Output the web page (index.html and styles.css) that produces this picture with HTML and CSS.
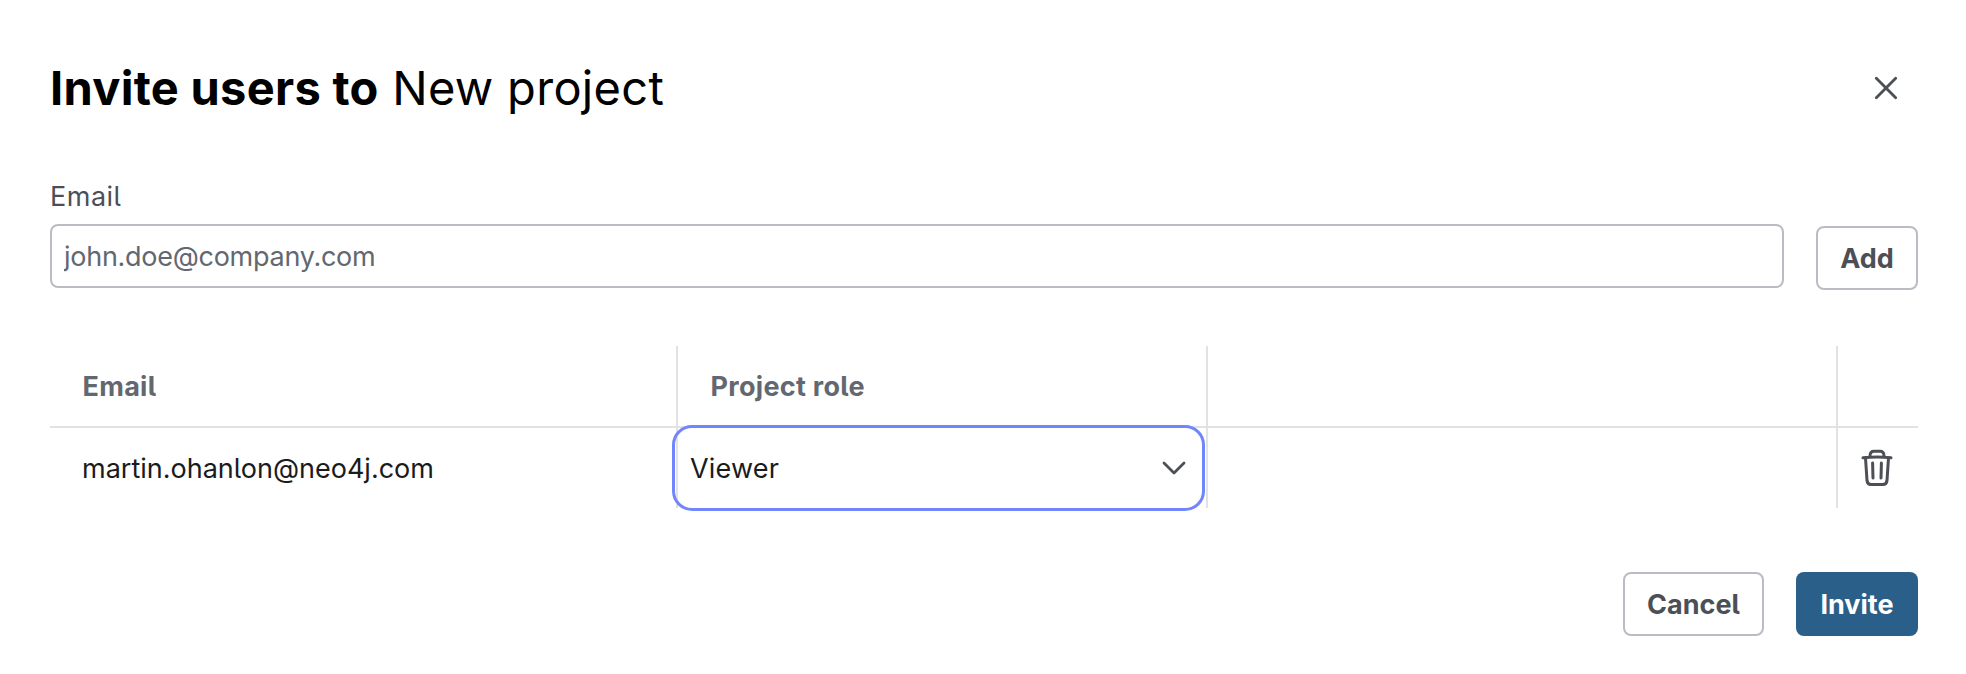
FILE: index.html
```html
<!DOCTYPE html>
<html lang="en">
<head>
<meta charset="utf-8">
<title>Invite users</title>
<link rel="stylesheet" href="styles.css">
</head>
<body>
<main class="dialog">
  <header class="dialog-header">
    <h1 class="title"><b class="title-lead">Invite users to</b> <span class="title-name">New project</span></h1>
    <button class="icon-button close" aria-label="Close">
      <svg width="24" height="24" viewBox="0 0 24 24"><path d="M2.300 2.300 21.700 21.700M21.700 2.300 2.300 21.700"/></svg>
    </button>
  </header>
  <form class="invite-form">
    <label class="field"><span class="field-label">Email</span>
      <input class="field-input" type="email" placeholder="john.doe@company.com">
    </label>
    <button class="button add" type="button"><span>Add</span></button>
  </form>
  <section class="table">
    <div class="cell head">Email</div>
    <div class="cell head">Project role</div>
    <div class="cell head"></div>
    <div class="cell head"></div>
    <div class="cell">martin.ohanlon@neo4j.com</div>
    <div class="cell role-cell">
      <div class="select" tabindex="0"><span class="select-value">Viewer</span>
        <svg width="24" height="24" viewBox="0 0 24 24"><path d="M2 7 12 17 22 7"/></svg>
      </div>
    </div>
    <div class="cell"></div>
    <div class="cell action-cell">
      <button class="icon-button trash" aria-label="Remove">
        <svg width="32" height="38" viewBox="0 0 32 38"><path d="M2 8.800Q16 7.200 30 8.800M9 8V6.500Q9.200 2.300 13 2.300H19Q22.800 2.300 23 6.500V8M4.500 9 6 31.500Q6.400 35.500 10 35.500H22Q25.600 35.500 26 31.500L27.500 9M11.600 14 12 29M20.400 14 20 29"/></svg>
      </button>
    </div>
  </section>
  <footer class="dialog-footer">
    <button class="button cancel"><span>Cancel</span></button>
    <button class="button primary"><span>Invite</span></button>
  </footer>
</main>
</body>
</html>
```
FILE: styles.css
```css
* { box-sizing: border-box; }
body { margin: 0; background: #fff; font-family: Inter, "Liberation Sans", sans-serif; font-size: 27px; font-feature-settings: "cv05"; color: #1a1b1d; }
svg { display: block; fill: none; stroke: #4d4f56; stroke-width: 2.8; stroke-linecap: round; stroke-linejoin: round; }
button { font: inherit; font-feature-settings: inherit; background: none; border: 0; padding: 0; }
.dialog { width: 1966px; height: 674px; padding: 56px 48px 38px 50px; display: flex; flex-direction: column; }
.dialog-header { height: 64px; display: flex; align-items: center; justify-content: space-between; padding-right: 20px; }
.title { margin: 0; font-size: 47px; line-height: 64px; font-weight: 400; letter-spacing: 0.3px; color: #000; white-space: nowrap; }
.title-lead { font-weight: 700; }
.invite-form { margin-top: 56px; height: 114px; display: flex; gap: 32px; align-items: flex-end; }
.field { flex: 1; display: flex; flex-direction: column; height: 112px; }
.field-label { height: 48px; line-height: 42px; letter-spacing: 0.5px; color: #4d4f56; }
.field-input { height: 64px; border: 2px solid #bbbbc3; border-radius: 8px; padding: 0 12px; font: inherit; font-feature-settings: inherit; letter-spacing: -0.27px; width: 100%; }
.field-input::placeholder { color: #636770; opacity: 1; }
.invite-form .field { align-self: flex-start; }
.button { height: 64px; border: 2px solid #bbbbc3; border-radius: 8px; font-weight: 700; color: #4d4f56; display: flex; align-items: center; justify-content: center; }
.add { width: 102px; }
.cancel { width: 141px; }
.primary { width: 122px; border: 0; background: #2a5f8a; color: #fff; }
.table { margin-top: 56px; display: grid; grid-template-columns: 628px 530px 630px 80px; grid-template-rows: 82px 80px; }
.cell { border-right: 2px solid #e1e2e4; display: flex; align-items: center; padding-left: 32px; }
.cell:nth-child(4n) { border-right: 0; }
.head { border-bottom: 2px solid #e1e2e4; padding-left: 32.5px; font-weight: 700; letter-spacing: 0.3px; color: #636770; }
.role-cell { padding: 0; }
.select { flex: none; width: 533px; height: 86px; margin-left: -6px; border: 3px solid #7286fb; border-radius: 20px; outline: 0; display: flex; align-items: center; justify-content: space-between; padding: 0 16px 0 15px; letter-spacing: 0.2px; }
.action-cell { padding-left: 23px; }
.trash svg { stroke-width: 3; }
.dialog-footer { margin-top: 64px; display: flex; justify-content: flex-end; gap: 32px; }
```
